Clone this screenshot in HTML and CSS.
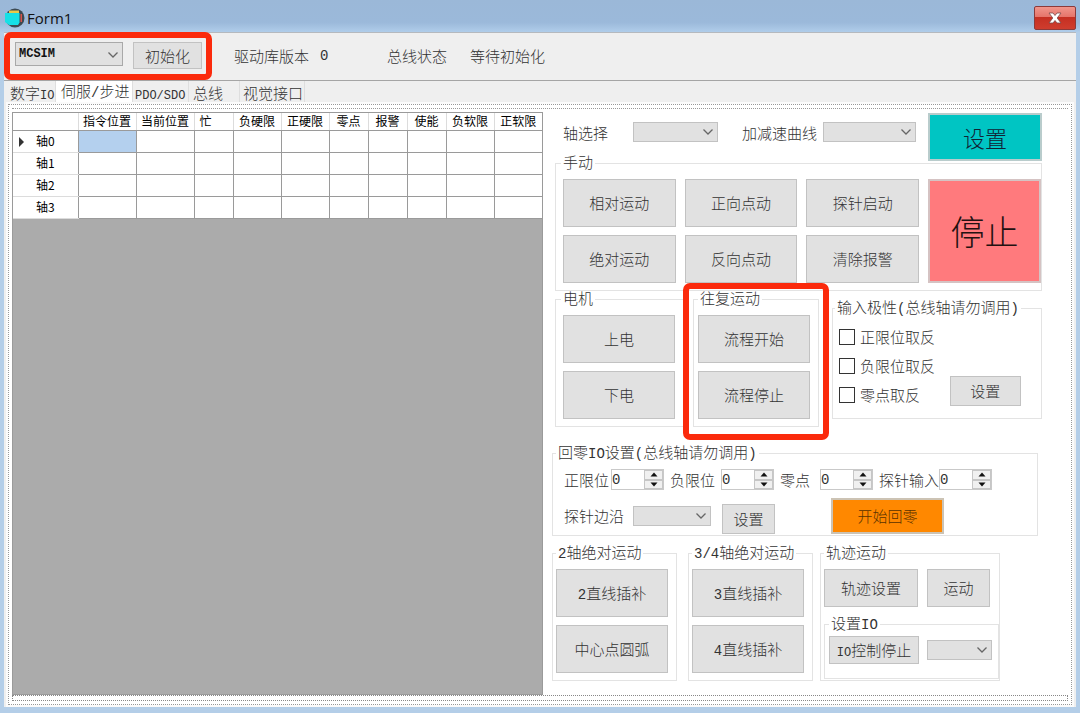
FILE: index.html
```
<!DOCTYPE html>
<html lang="zh-CN">
<head>
<meta charset="utf-8">
<title>Form1</title>
<link rel="stylesheet" href="styles.css">
</head>
<body>
<svg class="defs" aria-hidden="true">
  <symbol id="chevron" viewBox="0 0 12 8"><path d="M1.5 1.5 6 6l4.500-4.500" fill="none" stroke="#666" stroke-width="1.300"/></symbol>
  <symbol id="up" viewBox="0 0 8 5"><path d="M4 .5 7.500 4.500h-7z"/></symbol>
  <symbol id="down" viewBox="0 0 8 5"><path d="M4 4.500 7.500.5h-7z"/></symbol>
</svg>
<div class="window">
  <header class="titlebar">
    <svg class="app-icon" viewBox="0 0 20 20" aria-hidden="true">
      <circle cx="10" cy="10" r="9.500" fill="#3d4a52"/>
      <path d="M4 2.500h10v3H4z" fill="#e8c94a"/>
      <path d="M15.500 6h1.500v8h-1.500z" fill="#d9534a"/>
      <path d="M0 5h14.500v9.500L13 17H4L0 14z" fill="#16e0e6"/>
    </svg>
    <h1 class="title">Form1</h1>
    <button class="close" type="button" aria-label="关闭">
      <svg viewBox="0 0 14 12" aria-hidden="true"><path d="M1 1h4l2 2.500L9 1h4L9.200 6 13 11H9L7 8.500 5 11H1l3.800-5z" fill="#fff" stroke="#7a4a4a" stroke-width=".8"/></svg>
    </button>
  </header>
  <div class="client">
    <div class="toolbar">
      <div class="init">
        <span class="combo combo-card"><select class="strong" aria-label="控制卡"><option>MCSIM</option></select><svg><use href="#chevron"/></svg></span>
        <button class="btn btn-init" type="button">初始化</button>
        <div class="highlight highlight-init"></div>
      </div>
      <span class="version">驱动库版本</span><span class="version-value mono">0</span>
      <span class="bus">总线状态</span><span>等待初始化</span>
    </div>
    <nav class="tabs">
      <button class="tab tab-io" type="button">数字<span class="mono small">IO</span></button>
      <button class="tab tab-servo active" type="button">伺服<span class="mono">/</span>步进</button>
      <button class="tab tab-pdo" type="button"><span class="mono small">PDO/SDO</span></button>
      <button class="tab tab-bus" type="button">总线</button>
      <button class="tab tab-vision" type="button">视觉接口</button>
    </nav>
    <main class="page">
      <div class="panes">
        <section class="grid-pane">
          <table class="axes">
            <colgroup><col class="c-head"><col class="c-pos"><col class="c-pos"><col class="c-flag"><col class="c-limit"><col class="c-limit"><col class="c-flag"><col class="c-flag"><col class="c-flag"><col class="c-limit"><col class="c-limit"></colgroup>
            <thead><tr><th></th><th>指令位置</th><th>当前位置</th><th class="left">忙</th><th>负硬限</th><th>正硬限</th><th>零点</th><th>报警</th><th>使能</th><th>负软限</th><th>正软限</th></tr></thead>
            <tbody>
              <tr><th class="current">轴0</th><td class="selected"></td><td></td><td></td><td></td><td></td><td></td><td></td><td></td><td></td><td></td></tr>
              <tr><th>轴1</th><td></td><td></td><td></td><td></td><td></td><td></td><td></td><td></td><td></td><td></td></tr>
              <tr><th>轴2</th><td></td><td></td><td></td><td></td><td></td><td></td><td></td><td></td><td></td><td></td></tr>
              <tr><th>轴3</th><td></td><td></td><td></td><td></td><td></td><td></td><td></td><td></td><td></td><td></td></tr>
            </tbody>
          </table>
        </section>
        <section class="controls">
          <div class="upper">
            <div class="select-row">
              <div class="selectors">
                <label class="l-axis" for="axis">轴选择</label>
                <span class="combo combo-axis"><select id="axis"></select><svg><use href="#chevron"/></svg></span>
                <label class="l-curve" for="curve">加减速曲线</label>
                <span class="combo combo-curve"><select id="curve"></select><svg><use href="#chevron"/></svg></span>
              </div>
              <button class="btn btn-set" type="button">设置</button>
            </div>
            <fieldset class="manual">
              <legend>手动</legend>
              <div class="manual-grid">
                <button class="btn" type="button">相对运动</button>
                <button class="btn" type="button">正向点动</button>
                <button class="btn" type="button">探针启动</button>
                <button class="btn btn-stop" type="button">停止</button>
                <button class="btn" type="button">绝对运动</button>
                <button class="btn" type="button">反向点动</button>
                <button class="btn" type="button">清除报警</button>
              </div>
            </fieldset>
            <div class="middle">
              <fieldset class="motor">
                <legend>电机</legend>
                <div class="stack">
                  <button class="btn" type="button">上电</button>
                  <button class="btn" type="button">下电</button>
                </div>
              </fieldset>
              <div class="cycle-wrap">
                <fieldset class="cycle">
                  <legend>往复运动</legend>
                  <div class="stack">
                    <button class="btn" type="button">流程开始</button>
                    <button class="btn" type="button">流程停止</button>
                  </div>
                </fieldset>
                <div class="highlight highlight-cycle"></div>
              </div>
              <fieldset class="polarity">
                <legend>输入极性<span class="mono">(</span>总线轴请勿调用<span class="mono">)</span></legend>
                <div class="polarity-body">
                  <div class="checks">
                    <label><input type="checkbox">正限位取反</label>
                    <label><input type="checkbox">负限位取反</label>
                    <label><input type="checkbox">零点取反</label>
                  </div>
                  <button class="btn btn-polarity" type="button">设置</button>
                </div>
              </fieldset>
            </div>
          </div>
          <fieldset class="homing">
            <legend>回零<span class="mono">IO</span>设置<span class="mono">(</span>总线轴请勿调用<span class="mono">)</span></legend>
            <div class="spin-row">
              <div class="unit"><label class="l-pos" for="pos">正限位</label><span class="spin"><input id="pos" type="text" value="0"><span class="arrows"><button type="button" aria-label="加"><svg><use href="#up"/></svg></button><button type="button" aria-label="减"><svg><use href="#down"/></svg></button></span></span></div>
              <div class="unit"><label class="l-neg" for="neg">负限位</label><span class="spin"><input id="neg" type="text" value="0"><span class="arrows"><button type="button" aria-label="加"><svg><use href="#up"/></svg></button><button type="button" aria-label="减"><svg><use href="#down"/></svg></button></span></span></div>
              <div class="unit"><label class="l-zero" for="zero">零点</label><span class="spin"><input id="zero" type="text" value="0"><span class="arrows"><button type="button" aria-label="加"><svg><use href="#up"/></svg></button><button type="button" aria-label="减"><svg><use href="#down"/></svg></button></span></span></div>
              <div class="unit"><label for="probe">探针输入</label><span class="spin"><input id="probe" type="text" value="0"><span class="arrows"><button type="button" aria-label="加"><svg><use href="#up"/></svg></button><button type="button" aria-label="减"><svg><use href="#down"/></svg></button></span></span></div>
            </div>
            <div class="edge-row">
              <label class="l-edge" for="edge">探针边沿</label>
              <span class="combo combo-edge"><select id="edge"></select><svg><use href="#chevron"/></svg></span>
              <button class="btn btn-edge" type="button">设置</button>
              <button class="btn btn-home" type="button">开始回零</button>
            </div>
          </fieldset>
          <div class="bottom">
            <fieldset class="interp">
              <legend><span class="mono">2</span>轴绝对运动</legend>
              <div class="stack">
                <button class="btn" type="button"><span class="mono">2</span>直线插补</button>
                <button class="btn" type="button">中心点圆弧</button>
              </div>
            </fieldset>
            <fieldset class="interp">
              <legend><span class="mono">3/4</span>轴绝对运动</legend>
              <div class="stack">
                <button class="btn" type="button"><span class="mono">3</span>直线插补</button>
                <button class="btn" type="button"><span class="mono">4</span>直线插补</button>
              </div>
            </fieldset>
            <fieldset class="track">
              <legend>轨迹运动</legend>
              <div class="track-row">
                <button class="btn btn-track" type="button">轨迹设置</button>
                <button class="btn btn-move" type="button">运动</button>
              </div>
              <fieldset class="io">
                <legend>设置<span class="mono">IO</span></legend>
                <div class="io-row">
                  <button class="btn btn-io" type="button"><span class="mono small">IO</span>控制停止</button>
                  <span class="combo combo-io"><select aria-label="IO"></select><svg><use href="#chevron"/></svg></span>
                </div>
              </fieldset>
            </fieldset>
          </div>
        </section>
      </div>
      <div class="strip"></div>
    </main>
  </div>
</div>
</body>
</html>
```
FILE: styles.css
```
* { box-sizing: border-box; }
body {
  margin: 0;
  font: 300 15px/20px "Noto Sans CJK SC", sans-serif;
  color: #333;
}
button, select, input { font: inherit; color: inherit; margin: 0; padding: 0; }
.defs { display: none; }
.mono { font-family: "Liberation Mono", monospace; font-size: 14px; line-height: 1; }
.small { font-size: 12px; }
.strong { font: 700 12px/20px "Liberation Mono", monospace; color: #111; }

.window {
  display: flex;
  flex-direction: column;
  min-height: 100vh;
  padding: 0 4px 6px;
  background: #b4cee8;
}
.titlebar {
  display: flex;
  align-items: center;
  height: 32px;
  margin: 0 -4px;
  padding: 4px 4px 0 5px;
  background: linear-gradient(#9bb8d8 0, #9bb9da 70%, #b0cdea 100%);
}
.app-icon { width: 20px; height: 20px; }
.title { margin: 0 auto 0 2px; font: 400 15px/20px "Open Sans", sans-serif; color: #111; }
.close {
  display: flex;
  align-items: center;
  justify-content: center;
  width: 42px;
  height: 24px;
  border: 1px solid #8c3a3a;
  border-radius: 2px;
  background: linear-gradient(#f0968c 0, #e5746a 45%, #c52f22 46%, #cf3d2e 100%);
}
.close svg { width: 14px; height: 12px; }

.client {
  display: flex;
  flex: 1;
  flex-direction: column;
  border-top: 1px solid #b5b9be;
  background: #efefef;
}
.toolbar {
  display: flex;
  align-items: center;
  height: 48px;
  padding-bottom: 2px;
  border-bottom: 1px solid #a5a5a5;
}
.init {
  position: relative;
  display: flex;
  gap: 10px;
  width: 230px;
  padding-left: 11px;
}
.version { width: 86px; }
.version-value { width: 67px; }
.bus { width: 83px; }
.highlight {
  position: absolute;
  border: 6px solid #fb2a0c;
  border-radius: 7px;
  pointer-events: none;
}
.highlight-init { inset: -10px 22px -11px 0; }
.highlight-cycle { inset: -6px -10px -13px -10px; }

.combo { position: relative; display: block; flex: none; height: 20px; }
.combo select {
  display: block;
  width: 100%;
  height: 100%;
  appearance: none;
  border: 1px solid #c2c2c2;
  border-radius: 0;
  background: #e1e1e1;
}
.combo svg { position: absolute; right: 4px; top: 6px; width: 12px; height: 8px; pointer-events: none; }
.combo-card { width: 108px; height: 24px; }
.combo-card select { padding-left: 3px; border-color: #a9a9a9; }
.combo-card svg { top: 9px; }
.combo-axis { width: 85px; }
.combo-curve { width: 93px; }
.combo-edge { width: 78px; }
.combo-io { width: 65px; }

.btn { border: 1px solid #c2c2c2; background: #e1e1e1; white-space: nowrap; }
.btn-init { width: 69px; height: 27px; }

.tabs { display: flex; height: 23px; padding-left: 4px; }
.tab {
  height: 23px;
  padding-left: 2px;
  border: 0;
  border-right: 1px solid #dedede;
  background: none;
  text-align: left;
  white-space: nowrap;
}
.tab-io { width: 48px; }
.tab-servo { width: 77px; }
.tab-pdo { width: 56px; }
.tab-bus { width: 51px; padding-left: 4px; }
.tab-vision { width: 65px; padding-left: 3px; }
.tab.active { padding: 0 0 4px 5px; background: #fff; }

.page {
  display: flex;
  flex: 1;
  flex-direction: column;
  margin: 0 4px 2px;
  padding: 3px;
  border: 1px dotted #999;
  background: #fff;
  outline: 2px solid #fbfbfb;
}
.panes {
  display: flex;
  flex: 1;
  padding-top: 3px;
  border-top: 1px dotted #999;
}
.strip { height: 6px; border: 1px dotted #888; }
.grid-pane { flex: 530 1 0; border: 1px solid #9a9a9a; background: #ababab; }
.axes {
  width: 100%;
  table-layout: fixed;
  border-collapse: collapse;
  background: #fff;
  color: #000;
  font-size: 12px;
  line-height: 16px;
}
.axes th, .axes td { height: 22px; padding: 0; border: 1px solid #9a9a9a; }
.axes th { font-weight: 400; border-color: #dcdcdc #9a9a9a; white-space: nowrap; }
.axes thead th { height: 17px; border-color: #9a9a9a #dcdcdc; }
.axes tr:first-child > * { border-top: 0; }
.axes tbody tr:first-child > td { border-top: 1px solid #9a9a9a; }
.axes tr > :first-child { border-left: 0; }
.axes tr > :last-child { border-right: 0; }
.axes .left { padding-left: 5px; text-align: left; }
.axes .selected { background: #b4d0ee; }
.axes .current::before {
  content: "";
  float: left;
  margin: 4px -12px 0 6px;
  border-left: 5px solid #333;
  border-top: 5px solid transparent;
  border-bottom: 5px solid transparent;
}
.c-head { width: 65px; }
.c-pos { width: 58px; }
.c-flag { width: 39px; }
.c-limit { width: 48px; }

.controls { flex: 526 1 0; padding: 1px 27px 0 9px; }
.upper { padding-left: 3px; }
.select-row { display: flex; gap: 12px; padding-left: 8px; }
.selectors { display: flex; align-items: flex-start; padding-top: 9px; line-height: 22px; }
.l-axis { width: 70px; }
.l-curve { width: 81px; margin-left: 24px; }
.btn-set { flex: 1; height: 48px; border: 2px solid #b9cccc; background: #00c5c3; color: #123; font-size: 22px; }
.btn-stop { grid-column: 4; grid-row: 1 / 3; border: 2px solid #d5c3c3; background: #ff7a7d; color: #211; font-size: 34px; }

fieldset { min-width: 0; margin: 0; padding: 6px 0 7px 7px; border: 1px solid #e3e3e3; }
legend { height: 20px; padding: 0 2px; line-height: 18px; white-space: nowrap; }
.manual { margin-top: -8px; padding-right: 0; }
.manual legend, .motor legend { margin-left: -2px; }
.manual-grid { display: grid; grid-template-columns: repeat(4, 1fr); grid-auto-rows: 48px; gap: 8px 9px; }
.stack { display: grid; grid-auto-rows: 48px; gap: 8px; }
.middle { display: flex; align-items: flex-start; margin-top: -2px; }
.motor { width: 129px; padding-right: 8px; }
.cycle-wrap { position: relative; width: 126px; margin: 0 13px 0 9px; }
.cycle { padding-left: 4px; padding-right: 8px; }
.polarity { flex: 1; margin-top: 9px; padding: 4px 20px 9px 6px; }
.polarity legend { margin-left: -4px; }
.polarity-body { display: flex; align-items: flex-end; justify-content: space-between; }
.checks label { display: flex; align-items: center; gap: 5px; height: 29px; white-space: nowrap; }
.checks input { width: 16px; height: 16px; appearance: none; border: 1px solid #333; background: #fff; }
.btn-polarity { width: 71px; height: 30px; margin-bottom: 3px; }

.homing { margin: 16px 4px 0 0; padding: 6px 0 1px 11px; }
.homing legend { margin-left: -8px; }
.spin-row { display: flex; gap: 6px; }
.unit { display: flex; line-height: 22px; height: 21px; white-space: nowrap; }
.l-pos { width: 47px; }
.l-neg { width: 51px; }
.l-zero { width: 40px; }
.spin { display: flex; width: 53px; height: 21px; border: 1px solid #c9c9c9; background: #fff; }
.spin input { flex: 1; min-width: 0; border: 0; background: none; font: 14px/18px "Liberation Mono", monospace; outline: 0; }
.arrows { display: flex; flex-direction: column; width: 19px; }
.arrows button { display: flex; flex: 1; align-items: center; justify-content: center; border: 1px solid #c6c6c6; background: #f0f0f0; }
.arrows svg { width: 8px; height: 5px; fill: #111; }
.edge-row { display: flex; align-items: center; height: 36px; margin-top: 8px; }
.l-edge { width: 69px; }
.btn-edge { align-self: flex-end; width: 53px; height: 30px; margin: 0 56px 0 11px; }
.btn-home { width: 113px; height: 36px; border: 2px solid #ccc3b4; background: #ff8800; color: #5a3200; }

.bottom { display: flex; align-items: flex-start; margin-top: 7px; }
.interp { width: 125px; margin-right: 11px; padding-left: 3px; padding-right: 8px; }
.interp + .interp { margin-right: 7px; }
.track { width: 180px; padding: 6px 0 1px 3px; }
.track-row { display: flex; gap: 9px; }
.btn-track { width: 94px; height: 38px; }
.btn-move { width: 63px; height: 38px; }
.io { margin-top: 7px; padding: 2px 0 14px 4px; }
.io-row { display: flex; align-items: center; gap: 8px; }
.btn-io { width: 90px; height: 28px; }
```
